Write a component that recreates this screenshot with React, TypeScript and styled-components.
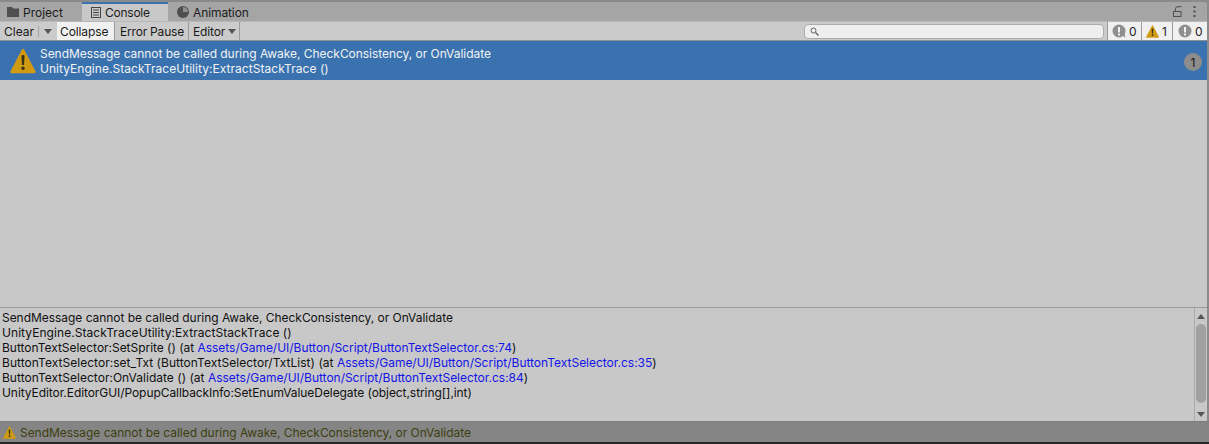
import React from "react";
import styled, { createGlobalStyle } from "styled-components";

const Global = createGlobalStyle`
  html, body { margin: 0; padding: 0; background: #282828; }
  #root { width: 1209px; height: 444px; overflow: hidden; }
`;

const Window = styled.div`
  width: 1209px;
  height: 444px;
  box-sizing: border-box;
  display: flex;
  flex-direction: column;
  font-family: Inter, "Liberation Sans", sans-serif;
  font-size: 12px;
  color: #0a0a0a;
  background: #8a8a8a;
  padding-right: 2px;
  overflow: hidden;
`;

const TabBar = styled.div`
  flex: none;
  display: flex;
  align-items: stretch;
  background: #a5a5a5;
  box-sizing: border-box;
  margin-top: 2px;
  height: 19px;
  padding-right: 11px;
  border-top-right-radius: 3px;
`;

const Tab = styled.div<{ $active?: boolean; $width: number; $pad: number; $track: number; $gap: number }>`
  width: ${(p) => p.$width}px;
  box-sizing: border-box;
  display: flex;
  align-items: center;
  gap: ${(p) => p.$gap}px;
  padding-left: ${(p) => p.$pad}px;
  padding-top: ${(p) => (p.$active ? 0 : 1)}px;
  letter-spacing: ${(p) => p.$track}px;
  color: #1c1c1c;
  background: ${(p) => (p.$active ? "#c8c8c8" : "transparent")};
  border-top: ${(p) => (p.$active ? "2px solid #3a72b0" : "none")};
`;

const Spacer = styled.div`
  flex: 1;
`;

const TabActions = styled.div`
  display: flex;
  align-items: center;
  gap: 11px;
`;

const Toolbar = styled.div`
  height: 20px;
  flex: none;
  box-sizing: border-box;
  display: flex;
  align-items: stretch;
  background: #cbcbcb;
  border-top: 1px solid #b8b8b8;
  border-bottom: 1px solid #8f8f8f;
`;

const ToolButton = styled.div<{ $on?: boolean; $w: number; $pad?: number; $center?: boolean; $bare?: boolean; $track?: number }>`
  width: ${(p) => p.$w}px;
  box-sizing: border-box;
  display: flex;
  align-items: center;
  justify-content: ${(p) => (p.$center ? "center" : "flex-start")};
  gap: 3px;
  padding-left: ${(p) => (p.$center ? 0 : p.$pad ?? 4)}px;
  border-right: ${(p) => (p.$bare ? "none" : "1px solid #9c9c9c")};
  background: ${(p) => (p.$on ? "#f0f0f0" : "transparent")};
  letter-spacing: ${(p) => p.$track ?? 0}px;
  color: #1a1a1a;
`;

const SplitLine = styled.span`
  width: 1px;
  height: 11px;
  align-self: center;
  background: #a2a2a2;
`;

const Caret = styled.span`
  width: 0;
  height: 0;
  border-left: 4px solid transparent;
  border-right: 4px solid transparent;
  border-top: 5px solid #555;
`;

const Search = styled.div`
  width: 300px;
  height: 15px;
  margin-top: 2px;
  box-sizing: border-box;
  background: #efefef;
  border: 1px solid #acacac;
  border-radius: 4px;
  display: flex;
  align-items: center;
  padding-left: 5px;
  margin-right: 3px;
`;

const Counter = styled.div<{ $w: number; $pad: number }>`
  width: ${(p) => p.$w}px;
  box-sizing: border-box;
  display: flex;
  align-items: center;
  gap: 3px;
  padding-left: ${(p) => p.$pad}px;
  background: #f0f0f0;
  border-left: 1px solid #9c9c9c;
  color: #222;
`;

const LogList = styled.div`
  flex: 1;
  min-height: 0;
  background: #c8c8c8;
  border-bottom: 1px solid #9a9a9a;
`;

const LogRow = styled.div`
  height: 39px;
  box-sizing: border-box;
  background: #3a72b0;
  color: #f2f2f2;
  display: flex;
  align-items: center;
  padding: 0 5px 0 10px;
  gap: 4px;
`;

const LogText = styled.div`
  flex: 1;
  line-height: 15px;
`;

const Line = styled.div<{ $track?: number }>`
  letter-spacing: ${(p) => p.$track ?? 0}px;
  white-space: pre;
`;

const Badge = styled.div`
  width: 18px;
  height: 18px;
  border-radius: 50%;
  background: #8c8c8c;
  color: #161616;
  display: flex;
  align-items: center;
  justify-content: center;
  margin-top: 3px;
`;

const Detail = styled.div`
  height: 113px;
  flex: none;
  display: flex;
  background: #c8c8c8;
  box-sizing: border-box;
`;

const DetailText = styled.div`
  flex: 1;
  padding: 2px 0 0 2px;
  line-height: 15px;
  color: #111;
`;

const Link = styled.span`
  color: #1414e6;
  letter-spacing: -0.02px;
`;

const ScrollBar = styled.div`
  width: 13px;
  flex: none;
  box-sizing: border-box;
  border-left: 1px solid #a9a9a9;
  display: flex;
  flex-direction: column;
  align-items: center;
  justify-content: space-between;
  padding: 6px 0 4px;
`;

const Thumb = styled.div`
  width: 10px;
  height: 79px;
  border-radius: 5px;
  background: #a0a0a0;
  margin-bottom: 4px;
`;

const Arrow = styled.span<{ $down?: boolean }>`
  width: 0;
  height: 0;
  border-left: 4px solid transparent;
  border-right: 4px solid transparent;
  ${(p) => (p.$down ? "border-top: 5px solid #555;" : "border-bottom: 5px solid #555;")}
`;

const StatusBar = styled.div`
  height: 21px;
  flex: none;
  background: #858585;
  border-top: 1px solid #7d7d7d;
  box-sizing: border-box;
  display: flex;
  align-items: center;
  gap: 4px;
  padding: 1px 0 0 3px;
  letter-spacing: -0.04px;
  color: #3d3d10;
  margin-right: -2px;
`;

const BottomEdge = styled.div`
  height: 2px;
  flex: none;
  background: #282828;
  margin-right: -2px;
`;

const Warn = ({ size }: { size: number }) => (
  <svg width={size} height={size} viewBox="0 0 26 26" style={{ flex: "none" }}>
    <path d="M13 2 L24.5 24 H1.5 Z" fill="#d09a12" stroke="#d09a12" strokeWidth="2.5" strokeLinejoin="round" />
    <path d="M11.4 7.5 Q13 6.4 14.6 7.5 L14 17 H12 Z" fill="#3a3214" />
    <circle cx="13" cy="20.3" r="1.7" fill="#3a3214" />
  </svg>
);

const Bubble = ({ tail }: { tail?: boolean }) => (
  <svg width="14" height="14" viewBox="0 0 14 14" style={{ flex: "none" }}>
    <circle cx="7" cy="7" r="6.5" fill="#8e8e8e" />
    {tail && <path d="M9 11 L13.5 13.5 L12 8 Z" fill="#8e8e8e" />}
    <rect x="6" y="3" width="2" height="5.5" fill="#f0f0f0" />
    <rect x="6" y="9.5" width="2" height="2" fill="#f0f0f0" />
  </svg>
);

const Folder = () => (
  <svg width="12" height="10" viewBox="0 0 12 10">
    <path d="M0 0 H5 L6.5 1.5 H12 V10 H0 Z" fill="#4f4f4f" />
  </svg>
);

const ConsoleIcon = () => (
  <svg width="10" height="11" viewBox="0 0 10 11" fill="none" stroke="#454545">
    <rect x="0.5" y="0.5" width="9" height="10" />
    <path d="M2 3 H8 M2 5.5 H8 M2 8 H8" strokeWidth="1.2" />
  </svg>
);

const ClockIcon = () => (
  <svg width="12" height="12" viewBox="0 0 12 12">
    <circle cx="6" cy="6" r="6" fill="#4f4f4f" />
    <path d="M6 6 V1 A5 5 0 0 1 11 6 Z" fill="#8f8f8f" />
  </svg>
);

const LockIcon = () => (
  <svg width="9" height="11" viewBox="0 0 9 11" fill="none" stroke="#4e4e4e">
    <rect x="0.5" y="5.5" width="7.5" height="5" />
    <path d="M2.5 5 V2.5 Q2.5 0.7 5 0.7 H8.5" />
  </svg>
);

const Dots = () => (
  <svg width="3" height="11" viewBox="0 0 3 11" fill="#4e4e4e">
    <rect x="0.5" width="2" height="2" />
    <rect x="0.5" y="4.5" width="2" height="2" />
    <rect x="0.5" y="9" width="2" height="2" />
  </svg>
);

const SearchIcon = () => (
  <svg width="9" height="9" viewBox="0 0 9 9" fill="none" stroke="#666">
    <circle cx="3.5" cy="3.5" r="2.5" />
    <path d="M5.5 5.5 L8.5 8.5" strokeWidth="1.4" />
  </svg>
);

const file = "Assets/Game/UI/Button/Script/ButtonTextSelector.cs";

export default function App() {
  return (
    <Window>
      <Global />
      <TabBar>
        <Tab $width={82} $pad={7} $gap={4} $track={0}><Folder />Project</Tab>
        <Tab $active $width={86} $pad={9} $gap={4} $track={-0.25}><ConsoleIcon />Console</Tab>
        <Tab $width={90} $pad={9} $gap={4} $track={-0.1}><ClockIcon />Animation</Tab>
        <Spacer />
        <TabActions><LockIcon /><Dots /></TabActions>
      </TabBar>
      <Toolbar>
        <ToolButton $w={38} $bare>Clear</ToolButton>
        <SplitLine />
        <ToolButton $w={18} $center $bare><Caret /></ToolButton>
        <ToolButton $w={58} $on $pad={3} $track={-0.1}>Collapse</ToolButton>
        <ToolButton $w={74} $pad={5} $track={-0.2}>Error Pause</ToolButton>
        <ToolButton $w={51} $track={-0.15}>Editor<Caret /></ToolButton>
        <Spacer />
        <Search><SearchIcon /></Search>
        <Counter $w={34} $pad={4}><Bubble tail />0</Counter>
        <Counter $w={31} $pad={4}><Warn size={13} />1</Counter>
        <Counter $w={35} $pad={5}><Bubble />0</Counter>
      </Toolbar>
      <LogList>
        <LogRow>
          <Warn size={26} />
          <LogText>
            <Line $track={-0.04}>SendMessage cannot be called during Awake, CheckConsistency, or OnValidate</Line>
            <Line $track={0.04}>UnityEngine.StackTraceUtility:ExtractStackTrace ()</Line>
          </LogText>
          <Badge>1</Badge>
        </LogRow>
      </LogList>
      <Detail>
        <DetailText>
          <Line $track={-0.04}>SendMessage cannot be called during Awake, CheckConsistency, or OnValidate</Line>
          <Line $track={0.06}>UnityEngine.StackTraceUtility:ExtractStackTrace ()</Line>
          <Line $track={-0.03}>ButtonTextSelector:SetSprite () (at <Link>{file}:74</Link>)</Line>
          <Line $track={0.035}>ButtonTextSelector:set_Txt (ButtonTextSelector/TxtList) (at <Link>{file}:35</Link>)</Line>
          <Line $track={0.02}>ButtonTextSelector:OnValidate () (at <Link>{file}:84</Link>)</Line>
          <Line $track={-0.07}>UnityEditor.EditorGUI/PopupCallbackInfo:SetEnumValueDelegate (object,string[],int)</Line>
        </DetailText>
        <ScrollBar>
          <Arrow />
          <Thumb />
          <Arrow $down />
        </ScrollBar>
      </Detail>
      <StatusBar>
        <Warn size={13} />
        SendMessage cannot be called during Awake, CheckConsistency, or OnValidate
      </StatusBar>
      <BottomEdge />
    </Window>
  );
}
